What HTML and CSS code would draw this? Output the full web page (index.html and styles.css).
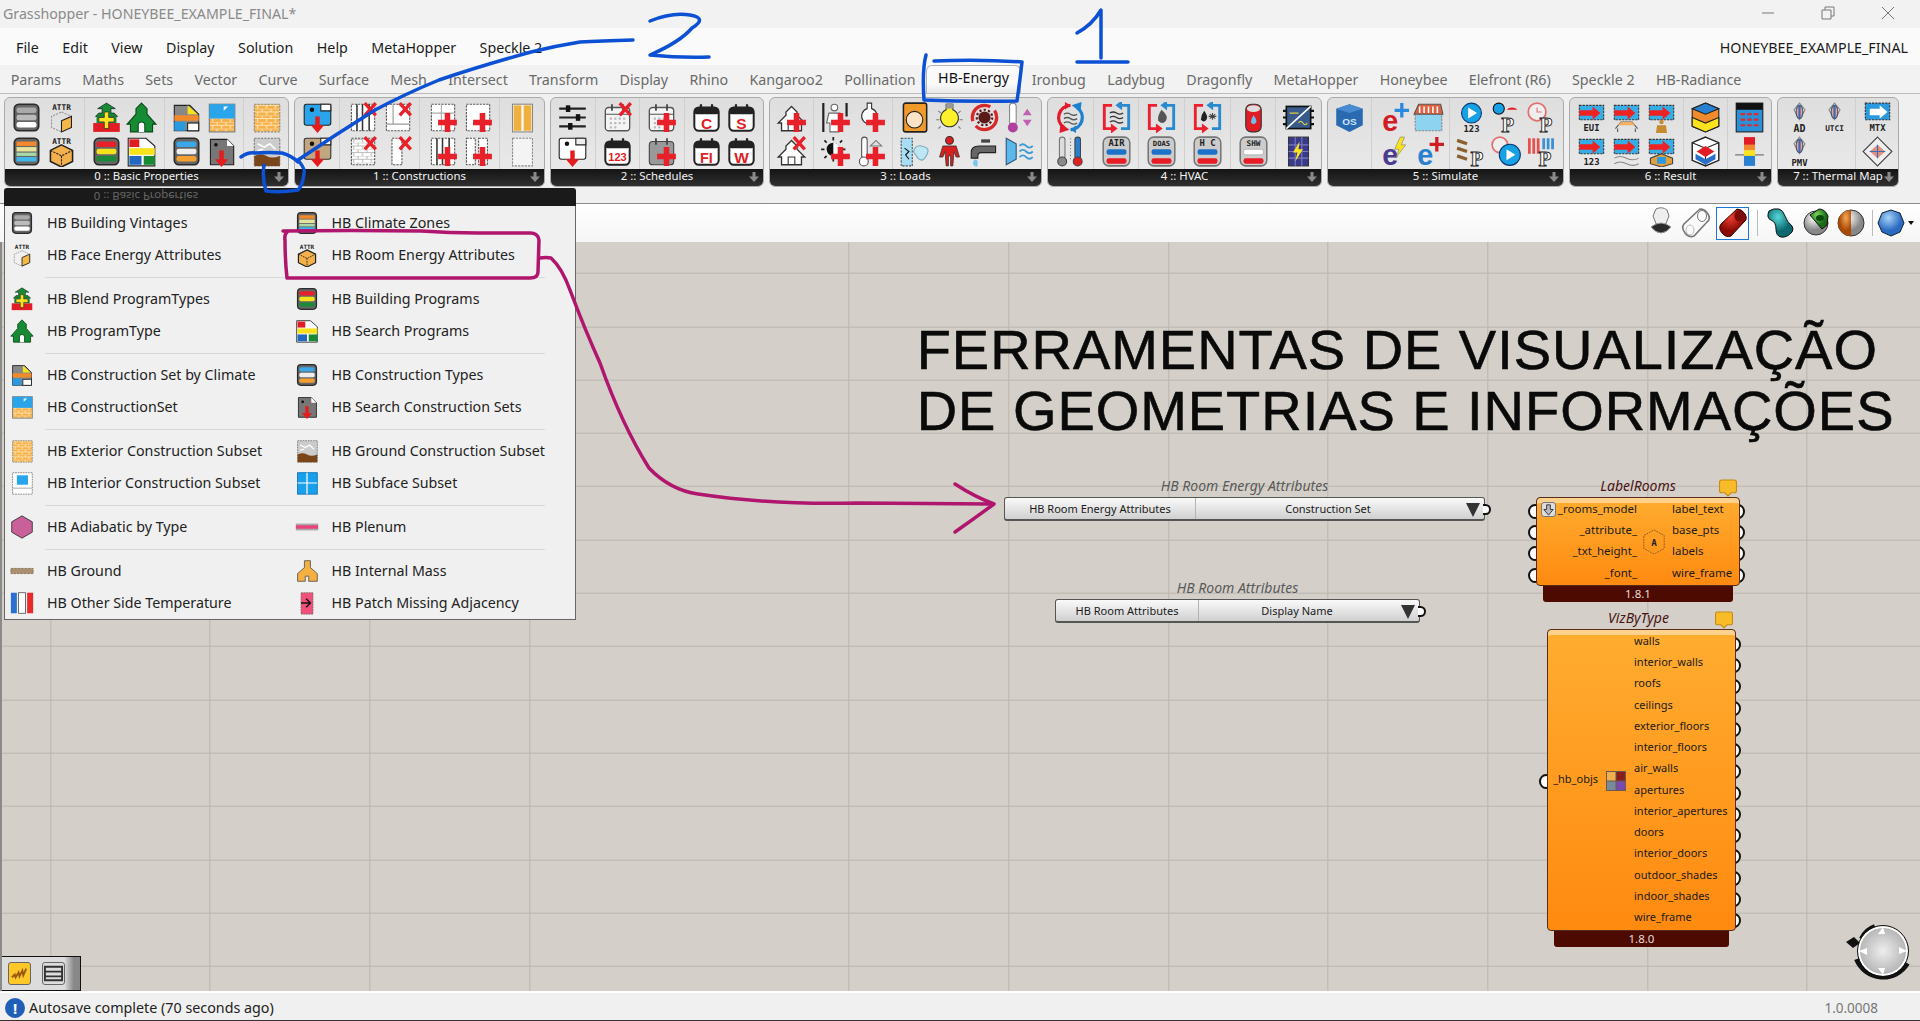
FILE: index.html
```html
<!DOCTYPE html>
<html lang="en">
<head>
<meta charset="utf-8">
<title>Grasshopper - HONEYBEE_EXAMPLE_FINAL*</title>
<link rel="stylesheet" href="styles.css">
</head>
<body>
<svg class="defs" xmlns="http://www.w3.org/2000/svg">
<defs>
<pattern id="brk" width="8" height="6" patternUnits="userSpaceOnUse"><rect width="8" height="6" fill="#f5b04a"/><path d="M0 0h8M0 3h8M2 0v3M6 3v3" stroke="#ffe6b8" stroke-width="1"/></pattern>
<pattern id="wbr" width="8" height="6" patternUnits="userSpaceOnUse"><rect width="8" height="6" fill="#fff"/><path d="M0 0h8M0 3h8M2 0v3M6 3v3" stroke="#bbb" stroke-width="1"/></pattern>
<radialGradient id="gTeal" cx=".4" cy=".3"><stop offset="0" stop-color="#58d8d8"/><stop offset="1" stop-color="#0a6a70"/></radialGradient>
<radialGradient id="gRed" cx=".4" cy=".3"><stop offset="0" stop-color="#f04030"/><stop offset="1" stop-color="#8a0a06"/></radialGradient>
<radialGradient id="gGreen" cx=".4" cy=".3"><stop offset="0" stop-color="#7ad858"/><stop offset="1" stop-color="#1a6a1a"/></radialGradient>
<radialGradient id="gWhite" cx=".4" cy=".3"><stop offset="0" stop-color="#fff"/><stop offset="1" stop-color="#888"/></radialGradient>
<radialGradient id="gOrange" cx=".6" cy=".3"><stop offset="0" stop-color="#f8a850"/><stop offset="1" stop-color="#a84a08"/></radialGradient>
<radialGradient id="gBlue" cx=".4" cy=".3"><stop offset="0" stop-color="#a8d4fa"/><stop offset="1" stop-color="#2a6ac0"/></radialGradient>
<rect id="fr" x="3" y="2" width="22" height="24" rx="4" fill="#666" stroke="#2a2a2a" stroke-width="1.5"/>
<path id="plus" fill="#e8202a" d="M16 10h5v6h6v5h-6v6h-5v-6h-6v-5h6z"/>
<path id="ex" fill="none" stroke="#e8202a" stroke-width="3" d="M16 1l10 11M26 1L16 12"/>
<path id="down" fill="#e41c1c" d="M12 13h4v8h4l-6 7-6-7h4z"/>
<rect id="dash" x="4" y="2" width="21" height="24" fill="#fff" stroke="#555" stroke-dasharray="2 1"/>
<g id="fold"><path d="M4 3h15l6 6v17H4z" fill="#777" stroke="#222"/><path d="M19 3l6 6h-6z" fill="#fff"/><circle cx="9" cy="8" r="1.6" fill="#111"/></g>
<g id="calb"><rect x="3" y="5" width="22" height="21" rx="4" fill="#fff" stroke="#222" stroke-width="1.8"/><rect x="3" y="5" width="22" height="6" rx="2" fill="#222"/><path d="M9 2v6M19 2v6" stroke="#222" stroke-width="2"/></g>
<g id="calw"><rect x="3" y="5" width="22" height="21" rx="3" fill="#f4f4f4" stroke="#555" stroke-width="1.2"/><path d="M3 11h22" stroke="#555"/><path d="M9 2v6M19 2v6" stroke="#444" stroke-width="1.6"/><path d="M7 15h14M7 19h14M7 23h8" stroke="#bbb" stroke-width="2" stroke-dasharray="2 2"/></g>
<g id="hs"><path d="M14 4l5 5v3l7 7h-3v7H5v-7H2l7-7V9z" fill="#fff" stroke="#333" stroke-width="1.2"/><path d="M11 26v-7h6v7" fill="none" stroke="#333"/></g>
<g id="mini"><rect x="3" y="3" width="22" height="13" fill="#35aee8" stroke="#333" stroke-dasharray="2 1"/><path d="M3 10h14" stroke="#ee2222" stroke-width="5"/><path d="M15 4l7 6-7 6z" fill="#ee2222"/></g>

<symbol id="vint" viewBox="0 0 28 28"><use href="#fr"/><rect x="5" y="5" width="18" height="5" rx="2" fill="#aaa"/><rect x="5" y="11.5" width="18" height="5" rx="2" fill="#bbb"/><rect x="5" y="18" width="18" height="5" rx="2" fill="#fff"/></symbol>
<symbol id="zones" viewBox="0 0 28 28"><use href="#fr"/><rect x="5" y="5" width="18" height="4" fill="#f08a2c"/><rect x="5" y="10" width="18" height="4" fill="#e6e49a"/><rect x="5" y="15" width="18" height="3" fill="#a6d8a8"/><rect x="5" y="19" width="18" height="4" fill="#42b6e8"/></symbol>
<symbol id="prog" viewBox="0 0 28 28"><use href="#fr"/><rect x="5" y="5" width="18" height="5" rx="2" fill="#e8202a"/><rect x="5" y="11.5" width="18" height="5" rx="2" fill="#f4e21c"/><rect x="5" y="18" width="18" height="5" rx="2" fill="#1a8a38"/></symbol>
<symbol id="types" viewBox="0 0 28 28"><use href="#fr"/><rect x="5" y="5" width="18" height="5" rx="2" fill="#3aa8e8"/><rect x="5" y="11.5" width="18" height="5" rx="2" fill="#eee"/><rect x="5" y="18" width="18" height="5" rx="2" fill="#f4a030"/></symbol>
<symbol id="afc" viewBox="0 0 28 28"><text class="tm" x="14" y="7" font-size="7">ATTR</text><path d="M14 9l9 4v10l-9 4-9-4V13z" fill="none" stroke="#999" stroke-dasharray="2 1"/><path d="M14 17l9-4v10l-9 4z" fill="#f4b84a" stroke="#222"/></symbol>
<symbol id="arm" viewBox="0 0 28 28"><text class="tm" x="14" y="7" font-size="7">ATTR</text><path d="M14 8l10 5v10l-10 5-10-5V13z" fill="#f4b04a" stroke="#222" stroke-width="1.4"/><path d="M4 13l10 5 10-5M14 18v10" fill="none" stroke="#222" stroke-dasharray="2 1"/></symbol>
<symbol id="blend" viewBox="0 0 28 28"><path d="M14 1l8 5h-4v4h3l3 3H4l3-3h3V6H6z" fill="#178a34" stroke="#111" stroke-width=".6"/><rect x="2" y="19" width="24" height="8" fill="#e21c24"/><rect x="5" y="13" width="18" height="6" fill="#178a34"/><path d="M12 9h4v5h5v4h-5v6h-4v-6H7v-4h5z" fill="#f8e21c" stroke="#333" stroke-width=".7"/></symbol>
<symbol id="house" viewBox="0 0 28 28"><path d="M14 1l5 5v5l8 9h-3v7H4v-7H1l8-9V6z" fill="#178a34" stroke="#0b4a1a"/><path d="M11 27v-6a3 3 0 016 0v6" fill="#fff" stroke="#0b4a1a"/></symbol>
<symbol id="sprog" viewBox="0 0 28 28"><path d="M2 2h16l8 7v18H2z" fill="#fff" stroke="#222"/><rect x="3" y="3" width="9" height="7" fill="#e21c24"/><rect x="3" y="11" width="23" height="6" fill="#f8e21c"/><rect x="3" y="18" width="11" height="8" fill="#2068c0"/><rect x="16" y="18" width="10" height="8" fill="#178a34"/></symbol>
<symbol id="clim" viewBox="0 0 28 28"><path d="M3 3h14l8 8v15H3z" fill="#888" stroke="#222"/><path d="M15 3l9 8h-9z" fill="#f8e21c"/><rect x="3" y="12" width="22" height="5" fill="#f08a2c"/><rect x="3" y="18" width="10" height="8" fill="#2a9ae0"/><rect x="15" y="19" width="10" height="7" fill="#fff" stroke="#222"/></symbol>
<symbol id="cset" viewBox="0 0 28 28"><rect x="3" y="2" width="23" height="25" fill="url(#brk)" stroke="#777"/><rect x="3" y="2" width="23" height="13" fill="#2aa4ea"/><path d="M16 4l4 0-4 4z" fill="#fff"/></symbol>
<symbol id="scon" viewBox="0 0 28 28"><use href="#fold"/><use href="#down"/></symbol>
<symbol id="brick" viewBox="0 0 28 28"><rect x="3" y="2" width="23" height="25" fill="url(#brk)" stroke="#888" stroke-dasharray="2 1"/></symbol>
<symbol id="grnd" viewBox="0 0 28 28"><rect x="3" y="2" width="23" height="25" fill="#ccc" stroke="#777" stroke-dasharray="2 1"/><path d="M6 7l6 3 5-3 5 5M6 13l5-1" stroke="#fff" stroke-width="1.4" fill="none"/><path d="M3 18q6-3 11 0t12 0v9H3z" fill="#7a4518"/></symbol>
<symbol id="inter" viewBox="0 0 28 28"><rect x="3" y="2" width="23" height="25" fill="#fff" stroke="#777" stroke-dasharray="2 1"/><rect x="8" y="5" width="13" height="11" fill="#2aa4ea"/><path d="M3 20h23" stroke="#999"/></symbol>
<symbol id="subf" viewBox="0 0 28 28"><rect x="3" y="2" width="23" height="25" fill="#18a0ec" stroke="#0a70b0"/><path d="M3 14h23M14 2v25" stroke="#fff" stroke-width="1.4"/></symbol>
<symbol id="hexa" viewBox="0 0 28 28"><path d="M14 1l12 7v12l-12 7-12-7V8z" fill="#c9609a" stroke="#333"/></symbol>
<symbol id="plen" viewBox="0 0 28 28"><rect x="1" y="10" width="26" height="8" fill="#aaa"/><rect x="1" y="12" width="26" height="4" fill="#e8447a"/></symbol>
<symbol id="gbar" viewBox="0 0 28 28"><rect x="1" y="11" width="26" height="6" fill="#aa8f70" stroke="#8a7050" stroke-dasharray="3 1"/></symbol>
<symbol id="mass" viewBox="0 0 28 28"><path d="M11 2h7v8l8 7v9H16v-6h-4v6H3v-9l8-7z" fill="#f4b040" stroke="#555"/></symbol>
<symbol id="osid" viewBox="0 0 28 28"><rect x="1" y="2" width="7" height="24" fill="#2a70d0"/><rect x="10" y="2" width="8" height="24" fill="#fff" stroke="#555"/><rect x="20" y="2" width="7" height="24" fill="#e82a2a"/></symbol>
<symbol id="patch" viewBox="0 0 28 28"><rect x="7" y="2" width="14" height="25" fill="#f0507a" stroke="#777" stroke-dasharray="2 1"/><path d="M7 14h11M13 9l5 5-5 5" fill="none" stroke="#111" stroke-width="1.6"/></symbol>

<symbol id="bd" viewBox="0 0 28 28"><rect x="2" y="2" width="24" height="19" rx="2" fill="#2aa4ea" stroke="#222"/><path d="M17 2h9v6h-9z" fill="#fff" stroke="#222"/><circle cx="9" cy="7" r="2" fill="#111"/><use href="#down"/></symbol>
<symbol id="td" viewBox="0 0 28 28"><rect x="2" y="2" width="24" height="19" rx="2" fill="#c2a680" stroke="#333"/><path d="M17 2h9v6h-9z" fill="#fff" stroke="#222"/><circle cx="9" cy="7" r="2" fill="#111"/><use href="#down"/></symbol>
<symbol id="wd" viewBox="0 0 28 28"><rect x="2" y="2" width="24" height="19" rx="2" fill="#fff" stroke="#222"/><circle cx="9" cy="7" r="2" fill="#111"/><path d="M17 2h9v6h-9z" fill="#eee" stroke="#222"/><use href="#down"/></symbol>
<symbol id="wx1" viewBox="0 0 28 28"><use href="#dash"/><path d="M9 2v24M14 2v24M20 2v24" stroke="#333" stroke-width="1.4"/><use href="#ex"/></symbol>
<symbol id="wx2" viewBox="0 0 28 28"><use href="#dash"/><path d="M4 20h21M10 2v18" stroke="#999"/><use href="#ex"/></symbol>
<symbol id="wx3" viewBox="0 0 28 28"><rect x="4" y="2" width="21" height="24" fill="url(#wbr)" stroke="#555" stroke-dasharray="2 1"/><use href="#ex"/></symbol>
<symbol id="wx4" viewBox="0 0 28 28"><rect x="9" y="2" width="9" height="24" fill="#fff" stroke="#555" stroke-dasharray="2 1"/><use href="#ex"/></symbol>
<symbol id="wp1" viewBox="0 0 28 28"><use href="#dash"/><path d="M4 10h21M13 2v24" stroke="#aaa"/><use href="#plus"/></symbol>
<symbol id="wp2" viewBox="0 0 28 28"><use href="#dash"/><use href="#plus"/></symbol>
<symbol id="wp3" viewBox="0 0 28 28"><use href="#dash"/><path d="M9 2v24M14 2v24M20 2v24" stroke="#333" stroke-width="1.4"/><use href="#plus"/></symbol>
<symbol id="wp4" viewBox="0 0 28 28"><rect x="4" y="2" width="8" height="24" fill="#fff" stroke="#555" stroke-dasharray="2 1"/><rect x="15" y="2" width="8" height="24" fill="#fff" stroke="#555" stroke-dasharray="2 1"/><use href="#plus"/></symbol>
<symbol id="orb" viewBox="0 0 28 28"><rect x="5" y="2" width="18" height="25" fill="#fff" stroke="#888"/><rect x="6" y="3" width="7" height="23" fill="#f0b040"/><rect x="15" y="3" width="7" height="23" fill="#f0b040"/></symbol>
<symbol id="blk" viewBox="0 0 28 28"><rect x="5" y="2" width="18" height="25" fill="#f4f4f4" stroke="#888" stroke-dasharray="2 1"/></symbol>

<symbol id="sli" viewBox="0 0 28 28"><path d="M2 6h24M2 14h24M2 22h24" stroke="#222" stroke-width="2"/><rect x="8" y="3" width="4" height="6" fill="#111"/><rect x="17" y="11" width="4" height="6" fill="#111"/><rect x="10" y="19" width="4" height="6" fill="#111"/></symbol>
<symbol id="cx" viewBox="0 0 28 28"><use href="#calw"/><use href="#ex"/></symbol>
<symbol id="cp" viewBox="0 0 28 28"><use href="#calw"/><use href="#plus"/></symbol>
<symbol id="cg" viewBox="0 0 28 28"><rect x="3" y="5" width="22" height="21" rx="3" fill="#999" stroke="#444"/><path d="M9 2v6M19 2v6" stroke="#444" stroke-width="1.6"/><use href="#plus"/></symbol>
<symbol id="c123" viewBox="0 0 28 28"><use href="#calb"/><text class="tl" x="14" y="23" font-size="10">123</text></symbol>
<symbol id="cC" viewBox="0 0 28 28"><use href="#calb"/><text class="tl" x="14" y="24" font-size="14">C</text></symbol>
<symbol id="cS" viewBox="0 0 28 28"><use href="#calb"/><text class="tl" x="14" y="24" font-size="14">S</text></symbol>
<symbol id="cF" viewBox="0 0 28 28"><use href="#calb"/><text class="tl" x="14" y="24" font-size="13">FI</text></symbol>
<symbol id="cW" viewBox="0 0 28 28"><use href="#calb"/><text class="tl" x="14" y="24" font-size="14">W</text></symbol>

<symbol id="hp" viewBox="0 0 28 28"><use href="#hs"/><use href="#plus"/></symbol>
<symbol id="hx" viewBox="0 0 28 28"><use href="#hs"/><use href="#ex"/></symbol>
<symbol id="perp" viewBox="0 0 28 28"><path d="M3 1v26M24 1v12" stroke="#222" stroke-width="2"/><circle cx="13" cy="5" r="3" fill="#fff" stroke="#666"/><path d="M8 10h10l2 9h-3v8H9v-8H6z" fill="#fff" stroke="#666"/><use href="#plus"/></symbol>
<symbol id="bulbp" viewBox="0 0 28 28"><path d="M11 1h4v5a7 7 0 11-4 0z" fill="#fff" stroke="#333"/><use href="#plus"/></symbol>
<symbol id="sunp" viewBox="0 0 28 28"><circle cx="12" cy="12" r="6" fill="#111"/><path d="M12 6a6 6 0 010 12z" fill="#fff"/><path d="M12 1v3M12 20v3M1 12h3M20 12h3M4 4l2 2M4 20l2-2M20 4l-2 2" stroke="#222" stroke-width="1.6"/><use href="#plus"/></symbol>
<symbol id="thp" viewBox="0 0 28 28"><rect x="6" y="1" width="5" height="19" rx="2.5" fill="#fff" stroke="#555"/><circle cx="8" cy="23" r="4" fill="#fff" stroke="#555"/><path d="M14 9l5-5 5 5z" fill="#ddd" stroke="#777"/><use href="#plus"/></symbol>
<symbol id="wash" viewBox="0 0 28 28"><rect x="4" y="1" width="21" height="26" rx="2" fill="#f09a2c" stroke="#222" stroke-width="1.4"/><circle cx="14" cy="16" r="7.5" fill="#fbe2c4" stroke="#222"/></symbol>
<symbol id="wair" viewBox="0 0 28 28"><rect x="2" y="2" width="10" height="25" fill="#a8def5" stroke="#555" stroke-dasharray="2 1"/><path d="M5 11l4 3-3 3 3 4" stroke="#111" fill="none"/><path d="M13 14q2-6 7-5t6 3-2 7-7 1z" fill="#bfe6f5" stroke="#7ab"/></symbol>
<symbol id="bulb" viewBox="0 0 28 28"><path d="M11 2h6v5a8 8 0 11-6 0z" fill="#fbf02a" stroke="#333"/><rect x="11" y="1" width="6" height="5" fill="#999"/><path d="M2 16h3M23 16h3M4 8l2 2M24 8l-2 2M4 24l2-2M24 24l-2-2" stroke="#777"/></symbol>
<symbol id="pred" viewBox="0 0 28 28"><circle cx="14" cy="4" r="3.5" fill="#d92020" stroke="#333"/><path d="M8 9h12l3 10h-3l-2-5-1 13h-2v-9h-2v9h-2l-1-13-2 5H5z" fill="#d92020" stroke="#333" stroke-width=".7"/></symbol>
<symbol id="gear" viewBox="0 0 28 28"><circle cx="14" cy="14" r="11" fill="none" stroke="#d62a2a" stroke-width="3" stroke-dasharray="26 5"/><circle cx="14" cy="14" r="5.5" fill="#5a1a1a"/><circle cx="14" cy="14" r="7" fill="none" stroke="#5a1a1a" stroke-width="2" stroke-dasharray="2 2"/></symbol>
<symbol id="fauc" viewBox="0 0 28 28"><path d="M2 15q0-6 7-6h15v6H11q-3 0-3 3v2H2z" fill="#666" stroke="#222"/><rect x="11" y="3" width="8" height="3" fill="#444"/><path d="M5 21q-3 4 0 6t3-2-3-4z" fill="#7cc6ee"/></symbol>
<symbol id="tharr" viewBox="0 0 28 28"><rect x="5" y="1" width="6" height="20" rx="3" fill="#fff" stroke="#888"/><circle cx="8" cy="23" r="4.5" fill="#b040a0"/><path d="M17 12l4-6 4 6zM17 16l4 6 4-6z" fill="#c060b0"/></symbol>
<symbol id="vent" viewBox="0 0 28 28"><path d="M2 2l9 5v14l-9 5z" fill="#5ab8ea" stroke="#357"/><path d="M14 9q3-3 6 0t6 0M14 14q3-3 6 0t6 0M14 19q3-3 6 0t6 0" stroke="#3a9ad8" stroke-width="1.6" fill="none"/></symbol>

<symbol id="cyc" viewBox="0 0 28 28"><path d="M14 3a11 11 0 00-6 20" fill="none" stroke="#e01c2c" stroke-width="3"/><path d="M5 19l8 6-9 3zM14 3l-5-3 0 7z" fill="#e01c2c"/><path d="M14 25a11 11 0 006-20" fill="none" stroke="#1c82d0" stroke-width="3"/><path d="M23 9l-8-6 9-3zM14 25l5 3 0-7z" fill="#1c82d0"/><path d="M8 11q3-2 6 0t6 0M8 15q3-2 6 0t6 0M8 19q3-2 6 0t6 0" stroke="#555" stroke-width="1.2" fill="none"/></symbol>
<symbol id="th2" viewBox="0 0 28 28"><rect x="4" y="1" width="5" height="20" rx="2.5" fill="#ddd" stroke="#777"/><circle cx="6.5" cy="23" r="4" fill="#888" stroke="#444"/><path d="M14 2v20" stroke="#777" stroke-dasharray="1 2"/><rect x="18" y="1" width="5" height="20" rx="2.5" fill="#2a80d0" stroke="#444"/><circle cx="20.500" cy="23" r="4" fill="#e02020" stroke="#444"/></symbol>
<g id="lp"><path d="M10 3H3v21h7" fill="none" stroke="#ee2030" stroke-width="2.6"/><path d="M9 19.500l6 4.500-6 4.500z" fill="#ee2030"/><path d="M18 24h7V3h-7" fill="none" stroke="#2a8ad0" stroke-width="2.6"/><path d="M19 -1.500L13 3l6 4.500z" fill="#2a8ad0"/></g>
<symbol id="l1" viewBox="0 0 28 28"><use href="#lp"/><path d="M8 10q3-2 6 0t6 0M8 14q3-2 6 0t6 0M8 18q3-2 6 0t6 0" stroke="#333" stroke-width="1.2" fill="none"/></symbol>
<symbol id="l2" viewBox="0 0 28 28"><use href="#lp"/><path d="M14 7q7 6 4 10t-7 0q-1-4 3-10z" fill="#555"/></symbol>
<symbol id="l3" viewBox="0 0 28 28"><use href="#lp"/><path d="M11 8q4 5 2 8t-5 0q0-4 3-8z" fill="#222"/><path d="M15 13h7M18.500 10v6M16 11l5 4M21 11l-5 4" stroke="#444"/></symbol>
<g id="hv"><rect x="2" y="1" width="24" height="26" rx="5" fill="#ccc" stroke="#777" stroke-width="1.4"/><rect x="5" y="12" width="18" height="5" rx="2" fill="#1c72c8"/><rect x="5" y="20" width="18" height="5" rx="2" fill="#e81c24"/></g>
<symbol id="AIR" viewBox="0 0 28 28"><use href="#hv"/><text class="tm" x="14" y="9" font-size="8">AIR</text></symbol>
<symbol id="DOAS" viewBox="0 0 28 28"><use href="#hv"/><text class="tm" x="14" y="9" font-size="6.500">DOAS</text></symbol>
<symbol id="HC" viewBox="0 0 28 28"><use href="#hv"/><text class="tm" x="14" y="9" font-size="8">H C</text></symbol>
<symbol id="SHW" viewBox="0 0 28 28"><rect x="2" y="1" width="24" height="26" rx="5" fill="#ccc" stroke="#777" stroke-width="1.4"/><rect x="5" y="12" width="18" height="5" rx="2" fill="#fff" stroke="#999" stroke-width=".5"/><rect x="5" y="20" width="18" height="5" rx="2" fill="#e81c24"/><text class="tm" x="14" y="9" font-size="7">SHW</text></symbol>
<symbol id="cyl" viewBox="0 0 28 28"><rect x="7" y="2" width="14" height="25" rx="5" fill="#e21c24" stroke="#333"/><ellipse cx="14" cy="6" rx="6" ry="3" fill="#ddd"/><path d="M14 12q4 5 2 7t-4 0q-1-2 2-7z" fill="#6ac0ee"/></symbol>
<symbol id="inv" viewBox="0 0 28 28"><rect x="3" y="4" width="22" height="20" fill="#3a5a8c" stroke="#111" stroke-width="1.5"/><path d="M0 8h3M0 14h3M0 20h3M25 8h3M25 14h3M25 20h3" stroke="#111" stroke-width="2"/><path d="M3 24L25 4" stroke="#fff" stroke-width="1.4"/><path d="M6 10h8" stroke="#e0d040"/><path d="M14 19q2-3 4 0t4 0" stroke="#e0d040" fill="none"/></symbol>
<symbol id="pv" viewBox="0 0 28 28"><rect x="5" y="1" width="18" height="26" fill="#3a3a8c" stroke="#333"/><path d="M5 8h18M5 14h18M5 20h18M11 1v26M17 1v26" stroke="#7a7ac0"/><path d="M15 5l-6 10h4l-2 8 7-11h-4z" fill="#fbe21c"/></symbol>

<symbol id="os" viewBox="0 0 28 28"><path d="M14 2l12 4v15l-12 6-12-6V6z" fill="#2a6ab0"/><path d="M14 2l12 4-12 4L2 6z" fill="#4a8ad0"/><text class="tl wh" x="14" y="21" font-size="9">OS</text></symbol>
<symbol id="ep" viewBox="0 0 28 28"><text class="te" x="11" y="26" fill="#d01c24" font-size="26">e</text><path d="M20 1h3v5h5v3h-5v5h-3V9h-5V6h5z" fill="#2a8ae0"/></symbol>
<symbol id="eb" viewBox="0 0 28 28"><text class="te" x="11" y="26" fill="#4a3a90" font-size="26">e</text><path d="M20 1l-5 11h4l-3 8 9-12h-4l3-7z" fill="#fbe21c" stroke="#777" stroke-width=".5"/></symbol>
<symbol id="ep2" viewBox="0 0 28 28"><text class="te" x="11" y="26" fill="#2a80d0" font-size="26">e</text><path d="M20 1h3v5h5v3h-5v5h-3V9h-5V6h5z" fill="#d01c24"/></symbol>
<symbol id="awn" viewBox="0 0 28 28"><rect x="2" y="9" width="24" height="17" fill="#8ed4f0" stroke="#888" stroke-dasharray="2 1"/><path d="M5 2h20l2 9H1z" fill="#e06040" stroke="#555"/><path d="M6 4v6M10 4v6M14 4v6M18 4v6M22 4v6" stroke="#fff" stroke-width="1.4"/></symbol>
<symbol id="pl" viewBox="0 0 28 28"><circle cx="14" cy="10" r="9" fill="#18a0e4" stroke="#0a3a70"/><path d="M11 5l8 5-8 5z" fill="#fff"/><text class="tm" x="14" y="27" font-size="8">123</text></symbol>
<symbol id="pin" viewBox="0 0 28 28"><circle cx="7" cy="6" r="5" fill="#18a0e4" stroke="#111"/><path d="M14 7a7 7 0 0110 0z" fill="#e21c24"/><text class="tp" x="15" y="27">P</text></symbol>
<symbol id="cl" viewBox="0 0 28 28"><circle cx="10" cy="9" r="8" fill="#eee" stroke="#e07070" stroke-width="1.6"/><path d="M10 5v4h4" stroke="#e07070" fill="none"/><text class="tp" x="18" y="27">P</text></symbol>
<symbol id="stp" viewBox="0 0 28 28"><path d="M1 4l9 3M1 11l9 3M1 18l9 3" stroke="#8a6030" stroke-width="3"/><text class="tp" x="19" y="27">P</text></symbol>
<symbol id="clp" viewBox="0 0 28 28"><circle cx="8" cy="8" r="7" fill="#eee" stroke="#e07070" stroke-width="1.500"/><circle cx="17" cy="17" r="9.500" fill="#18a0e4" stroke="#0a3a70"/><path d="M14 12l8 5-8 5z" fill="#fff"/></symbol>
<symbol id="htp" viewBox="0 0 28 28"><path d="M3 2v14M7 2v14M11 2v14" stroke="#e85050" stroke-width="2.5"/><path d="M16 2v10M20 2v10M24 2v10" stroke="#3a90d8" stroke-width="2.5"/><text class="tp" x="17" y="27">P</text></symbol>

<symbol id="rE" viewBox="0 0 28 28"><use href="#mini"/><text class="tm" x="14" y="26" font-size="8">EUI</text></symbol>
<symbol id="r1" viewBox="0 0 28 28"><use href="#mini"/><text class="tm" x="14" y="26" font-size="8">123</text></symbol>
<symbol id="rC" viewBox="0 0 28 28"><use href="#mini"/><path d="M4 24l5-6h10l5 6M6 24v3M22 24v3" fill="none" stroke="#555"/><path d="M9 18h10l3 3H6z" fill="#f0b060"/></symbol>
<symbol id="rW" viewBox="0 0 28 28"><use href="#mini"/><path d="M3 20q5-3 11 0t11 0M3 25q5-3 11 0t11 0" fill="none" stroke="#888"/></symbol>
<symbol id="rP" viewBox="0 0 28 28"><use href="#mini"/><circle cx="14" cy="18" r="2" fill="#c68a30"/><path d="M10 21h8l1 7h-10z" fill="#c68a30"/></symbol>
<symbol id="rB" viewBox="0 0 28 28"><use href="#mini"/><path d="M14 16l10 4v5l-10 3-10-3v-5z" fill="#e0a040" stroke="#444"/><rect x="10" y="19" width="8" height="6" fill="#2a9ae0"/></symbol>
<symbol id="cube1" viewBox="0 0 28 28"><path d="M14 1l12 5v16l-12 5-12-5V6z" fill="#f08a2c" stroke="#222"/><path d="M2 6l12 5 12-5-12-5z" fill="#2a80d0" stroke="#222"/><path d="M2 14l12 5 12-5v8l-12 5-12-5z" fill="#fbe21c" stroke="#222"/></symbol>
<symbol id="cube2" viewBox="0 0 28 28"><path d="M14 1l12 5v16l-12 5-12-5V6z" fill="#fff" stroke="#222" stroke-width="1.300"/><path d="M2 6l12 5 12-5M14 11v16" stroke="#222" fill="none"/><path d="M14 9l8 5-8 5-8-5z" fill="#e21c24"/><path d="M5 16l9 5 9-5v5l-9 5-9-5z" fill="#2a70c8"/></symbol>
<symbol id="tab" viewBox="0 0 28 28"><rect x="2" y="1" width="24" height="26" fill="#2a90d8" stroke="#222"/><rect x="2" y="1" width="24" height="6" fill="#111"/><path d="M6 11h4M12 11h4M18 11h4M6 16h4M12 16h4M18 16h4M6 21h4M12 21h4M18 21h4" stroke="#e02a2a" stroke-width="2"/></symbol>
<symbol id="bar" viewBox="0 0 28 28"><path d="M1 17h26" stroke="#777"/><rect x="9" y="1" width="10" height="7" fill="#e21c24"/><rect x="9" y="8" width="10" height="5" fill="#f08a2c"/><rect x="9" y="13" width="10" height="5" fill="#fbe21c"/><rect x="9" y="18" width="10" height="9" fill="#2a80d0"/></symbol>
<g id="tm"><path d="M14 1l5 6-5 9-5-9z" fill="#ddd" stroke="#888"/><ellipse cx="14" cy="9" rx="3" ry="6" fill="#e8a0a0" stroke="#456"/><path d="M14 3v12" stroke="#3a6ab0" stroke-width="2"/></g>
<symbol id="tAD" viewBox="0 0 28 28"><use href="#tm"/><text class="tm" x="14" y="27" font-size="9">AD</text></symbol>
<symbol id="tUT" viewBox="0 0 28 28"><use href="#tm"/><text class="tm" x="14" y="26" font-size="7">UTCI</text></symbol>
<symbol id="tPM" viewBox="0 0 28 28"><use href="#tm"/><text class="tm" x="14" y="27" font-size="8">PMV</text></symbol>
<symbol id="mtx" viewBox="0 0 28 28"><rect x="3" y="1" width="22" height="15" fill="#2a9ae0" stroke="#333" stroke-dasharray="2 1"/><path d="M7 6h9V3l7 6-7 6v-3H7z" fill="#fff"/><text class="tm" x="14" y="26" font-size="8">MTX</text></symbol>
<symbol id="tcube" viewBox="0 0 28 28"><path d="M14 1l13 13-13 13L1 14z" fill="#f0eeee" stroke="#444"/><path d="M14 8l7 6-7 6-7-6z" fill="#e09080"/><path d="M14 8v12M7 14h14" stroke="#3a70b0"/></symbol>
</defs>
</svg>

<div class="page">
  <header class="titlebar">
    <span class="wintitle">Grasshopper - HONEYBEE_EXAMPLE_FINAL*</span>
    <div class="winctl">
      <svg viewBox="0 0 14 14"><path d="M1 7h12" stroke="#777"/></svg>
      <svg viewBox="0 0 14 14"><path d="M1 4h9v9H1zM4 4V1h9v9h-3" fill="none" stroke="#777"/></svg>
      <svg viewBox="0 0 14 14"><path d="M1 1l12 12M13 1L1 13" stroke="#777"/></svg>
    </div>
  </header>
  <nav class="menubar">
    <span>File</span><span>Edit</span><span>View</span><span>Display</span><span>Solution</span><span>Help</span><span>MetaHopper</span><span>Speckle 2</span>
    <b class="docname">HONEYBEE_EXAMPLE_FINAL</b>
  </nav>
  <nav class="tabs">
    <span>Params</span><span>Maths</span><span>Sets</span><span>Vector</span><span>Curve</span><span>Surface</span><span>Mesh</span><span>Intersect</span><span>Transform</span><span>Display</span><span>Rhino</span><span>Kangaroo2</span><span>Pollination</span><span class="active">HB-Energy</span><span>Ironbug</span><span>Ladybug</span><span>Dragonfly</span><span>MetaHopper</span><span>Honeybee</span><span>Elefront (R6)</span><span>Speckle 2</span><span>HB-Radiance</span>
  </nav>
  <section class="ribbon">
    <div class="panel p0">
      <div class="pbody">
        <div class="grp"><svg class="ic"><use href="#vint"/></svg><svg class="ic"><use href="#zones"/></svg><svg class="ic"><use href="#afc"/></svg><svg class="ic"><use href="#arm"/></svg></div>
        <div class="grp"><svg class="ic"><use href="#blend"/></svg><svg class="ic"><use href="#prog"/></svg><svg class="ic"><use href="#house"/></svg><svg class="ic"><use href="#sprog"/></svg></div>
        <div class="grp"><svg class="ic"><use href="#clim"/></svg><svg class="ic"><use href="#types"/></svg><svg class="ic"><use href="#cset"/></svg><svg class="ic"><use href="#scon"/></svg></div>
        <div class="grp"><svg class="ic"><use href="#brick"/></svg><svg class="ic"><use href="#grnd"/></svg></div>
      </div>
      <div class="pfoot">0 :: Basic Properties</div>
    </div>
    <div class="panel p1">
      <div class="pbody">
        <div class="grp"><svg class="ic"><use href="#bd"/></svg><svg class="ic"><use href="#td"/></svg></div>
        <div class="grp"><svg class="ic"><use href="#wx1"/></svg><svg class="ic"><use href="#wx3"/></svg><svg class="ic"><use href="#wx2"/></svg><svg class="ic"><use href="#wx4"/></svg></div>
        <div class="grp"><svg class="ic"><use href="#wp1"/></svg><svg class="ic"><use href="#wp3"/></svg><svg class="ic"><use href="#wp2"/></svg><svg class="ic"><use href="#wp4"/></svg></div>
        <div class="grp"><svg class="ic"><use href="#orb"/></svg><svg class="ic"><use href="#blk"/></svg></div>
      </div>
      <div class="pfoot">1 :: Constructions</div>
    </div>
    <div class="panel p2">
      <div class="pbody">
        <div class="grp"><svg class="ic"><use href="#sli"/></svg><svg class="ic"><use href="#wd"/></svg></div>
        <div class="grp"><svg class="ic"><use href="#cx"/></svg><svg class="ic"><use href="#c123"/></svg></div>
        <div class="grp"><svg class="ic"><use href="#cp"/></svg><svg class="ic"><use href="#cg"/></svg></div>
        <div class="grp"><svg class="ic"><use href="#cC"/></svg><svg class="ic"><use href="#cF"/></svg><svg class="ic"><use href="#cS"/></svg><svg class="ic"><use href="#cW"/></svg></div>
      </div>
      <div class="pfoot">2 :: Schedules</div>
    </div>
    <div class="panel p3">
      <div class="pbody">
        <div class="grp"><svg class="ic"><use href="#hp"/></svg><svg class="ic"><use href="#hx"/></svg></div>
        <div class="grp"><svg class="ic"><use href="#perp"/></svg><svg class="ic"><use href="#sunp"/></svg><svg class="ic"><use href="#bulbp"/></svg><svg class="ic"><use href="#thp"/></svg></div>
        <div class="grp"><svg class="ic"><use href="#wash"/></svg><svg class="ic"><use href="#wair"/></svg><svg class="ic"><use href="#bulb"/></svg><svg class="ic"><use href="#pred"/></svg><svg class="ic"><use href="#gear"/></svg><svg class="ic"><use href="#fauc"/></svg><svg class="ic"><use href="#tharr"/></svg><svg class="ic"><use href="#vent"/></svg></div>
      </div>
      <div class="pfoot">3 :: Loads</div>
    </div>
    <div class="panel p4">
      <div class="pbody">
        <div class="grp"><svg class="ic"><use href="#cyc"/></svg><svg class="ic"><use href="#th2"/></svg></div>
        <div class="grp"><svg class="ic"><use href="#l1"/></svg><svg class="ic"><use href="#AIR"/></svg></div>
        <div class="grp"><svg class="ic"><use href="#l2"/></svg><svg class="ic"><use href="#DOAS"/></svg></div>
        <div class="grp"><svg class="ic"><use href="#l3"/></svg><svg class="ic"><use href="#HC"/></svg></div>
        <div class="grp"><svg class="ic"><use href="#cyl"/></svg><svg class="ic"><use href="#SHW"/></svg></div>
        <div class="grp"><svg class="ic"><use href="#inv"/></svg><svg class="ic"><use href="#pv"/></svg></div>
      </div>
      <div class="pfoot">4 :: HVAC</div>
    </div>
    <div class="panel p5">
      <div class="pbody">
        <div class="grp"><svg class="ic"><use href="#os"/></svg><span class="ic"></span></div>
        <div class="grp"><svg class="ic"><use href="#ep"/></svg><svg class="ic"><use href="#eb"/></svg><svg class="ic"><use href="#awn"/></svg><svg class="ic"><use href="#ep2"/></svg></div>
        <div class="grp"><svg class="ic"><use href="#pl"/></svg><svg class="ic"><use href="#stp"/></svg><svg class="ic"><use href="#pin"/></svg><svg class="ic"><use href="#clp"/></svg><svg class="ic"><use href="#cl"/></svg><svg class="ic"><use href="#htp"/></svg></div>
      </div>
      <div class="pfoot">5 :: Simulate</div>
    </div>
    <div class="panel p6">
      <div class="pbody">
        <div class="grp"><svg class="ic"><use href="#rE"/></svg><svg class="ic"><use href="#r1"/></svg><svg class="ic"><use href="#rC"/></svg><svg class="ic"><use href="#rW"/></svg><svg class="ic"><use href="#rP"/></svg><svg class="ic"><use href="#rB"/></svg></div>
        <div class="grp"><svg class="ic"><use href="#cube1"/></svg><svg class="ic"><use href="#cube2"/></svg></div>
        <div class="grp"><svg class="ic"><use href="#tab"/></svg><svg class="ic"><use href="#bar"/></svg></div>
      </div>
      <div class="pfoot">6 :: Result</div>
    </div>
    <div class="panel p7">
      <div class="pbody">
        <div class="grp"><svg class="ic"><use href="#tAD"/></svg><svg class="ic"><use href="#tPM"/></svg><svg class="ic"><use href="#tUT"/></svg><span class="ic"></span></div>
        <div class="grp"><svg class="ic"><use href="#mtx"/></svg><svg class="ic"><use href="#tcube"/></svg></div>
      </div>
      <div class="pfoot">7 :: Thermal Map</div>
    </div>
  </section>
  <section class="toolbar">
    <svg class="tb" viewBox="0 0 30 34"><path d="M10 3q6-3 11 1l2 6-4 10H11L7 10z" fill="#eee" stroke="#777"/><path d="M5 21q10-8 20 0-10 12-20 0z" fill="#2a2a2a" stroke="#999"/></svg>
    <svg class="tb" viewBox="0 0 30 34"><path d="M19 3q5 0 8 5t-1 8L13 30q-5 2-9-3t-1-9z" fill="#fafafa" stroke="#777" stroke-width="1.6"/><ellipse cx="21" cy="10" rx="4.500" ry="5.500" fill="#fff" stroke="#777"/><ellipse cx="9" cy="24" rx="4" ry="5" fill="none" stroke="#bbb"/></svg>
    <span class="tb-on"><svg class="tb" viewBox="0 0 30 34"><path d="M19 3q5 0 8 5t-1 8L13 30q-5 2-9-3t-1-9z" fill="url(#gRed)" stroke="#300"/><ellipse cx="21" cy="10" rx="4.500" ry="5.500" fill="#7a0c0a"/></svg></span>
    <i class="tb-sep"></i>
    <svg class="tb" viewBox="0 0 30 34"><path d="M3 5q4-3 10-2 4 1 6 7t7 10q2 3 0 6-5 6-11 5-5-1-5-8T5 14 3 5z" fill="url(#gTeal)" stroke="#111"/></svg>
    <svg class="tb" viewBox="0 0 30 34"><circle cx="15" cy="17" r="12" fill="url(#gWhite)" stroke="#333"/><path d="M9 9l9-6q6 0 9 7l-1 9-5 4z" fill="url(#gGreen)" stroke="#111"/><ellipse cx="19" cy="12" rx="4" ry="3" fill="#0a4a0a"/></svg>
    <svg class="tb" viewBox="0 0 30 34"><circle cx="15" cy="17" r="13" fill="url(#gWhite)" stroke="#333"/><path d="M15 4a13 13 0 000 26z" fill="url(#gOrange)"/></svg>
    <i class="tb-sep tight"></i>
    <svg class="tb" viewBox="0 0 30 34"><path d="M15 4l9 3 4 10-4 9-9 4-9-4-4-9 4-10z" fill="url(#gBlue)" stroke="#123"/></svg>
    <span class="caret"></span>
  </section>
  <main class="canvas">
    <h1 class="headline">FERRAMENTAS DE VISUALIZAÇÃO<br>DE GEOMETRIAS E INFORMAÇÕES</h1>

    <div class="vlist v1">
      <em class="ctitle">HB Room Energy Attributes</em>
      <span class="vname">HB Room Energy Attributes</span><span class="vval">Construction Set</span><i class="vtri"></i><i class="vport"></i>
    </div>
    <div class="vlist v2">
      <em class="ctitle">HB Room Attributes</em>
      <span class="vname">HB Room Attributes</span><span class="vval">Display Name</span><i class="vtri"></i><i class="vport"></i>
    </div>

    <div class="node n1">
      <em class="ctitle dark">LabelRooms</em>
      <svg class="bal" viewBox="0 0 18 17"><path d="M3 1h12q2 0 2 2v8q0 2-2 2h-3l-3 3-3-3H3q-2 0-2-2V3q0-2 2-2z" fill="#f8bc28" stroke="#c88a10"/></svg>
      <div class="ins">
        <div class="pin in">_rooms_model</div><div class="pin in">_attribute_</div><div class="pin in">_txt_height_</div><div class="pin in">_font_</div>
      </div>
      <svg class="nic" viewBox="0 0 28 28"><path d="M14 1l11 6v14l-11 6-11-6V7z" fill="none" stroke="#8a5a20" stroke-dasharray="2 1"/><text class="tm" x="14" y="18" font-size="10">A</text></svg>
      <div class="outs">
        <div class="pin out">label_text</div><div class="pin out">base_pts</div><div class="pin out">labels</div><div class="pin out">wire_frame</div>
      </div>
      <span class="flat"><svg viewBox="0 0 14 14"><path d="M5 2h4v5h3l-5 6-5-6h3z" fill="#bbb" stroke="#333"/></svg></span>
      <div class="nfoot">1.8.1</div>
    </div>

    <div class="node n2">
      <em class="ctitle dark">VizByType</em>
      <svg class="bal" viewBox="0 0 18 17"><path d="M3 1h12q2 0 2 2v8q0 2-2 2h-3l-3 3-3-3H3q-2 0-2-2V3q0-2 2-2z" fill="#f8bc28" stroke="#c88a10"/></svg>
      <div class="ins mid"><div class="pin in">_hb_objs</div></div>
      <svg class="nic sq" viewBox="0 0 22 22"><rect x="1" y="1" width="20" height="20" fill="#6a5a4a"/><rect x="2" y="2" width="8.500" height="8.500" fill="#f0b050"/><rect x="11.500" y="2" width="8.500" height="8.500" fill="#8a1c1c"/><rect x="2" y="11.500" width="8.500" height="8.500" fill="#7a8a98"/><rect x="11.500" y="11.500" width="8.500" height="8.500" fill="#7a4ab0"/></svg>
      <div class="outs">
        <div class="pin out">walls</div><div class="pin out">interior_walls</div><div class="pin out">roofs</div><div class="pin out">ceilings</div><div class="pin out">exterior_floors</div><div class="pin out">interior_floors</div><div class="pin out">air_walls</div><div class="pin out">apertures</div><div class="pin out">interior_apertures</div><div class="pin out">doors</div><div class="pin out">interior_doors</div><div class="pin out">outdoor_shades</div><div class="pin out">indoor_shades</div><div class="pin out">wire_frame</div>
      </div>
      <div class="nfoot">1.8.0</div>
    </div>

    <svg class="dial" viewBox="0 0 66 60">
      <path d="M2 19l8-5 6 6-7 5z" fill="#111"/>
      <path d="M13 36a28 28 0 0050 4M18 16q4-9 13-12" fill="none" stroke="#111" stroke-width="6"/>
      <defs><radialGradient id="dg"><stop offset="0" stop-color="#eee"/><stop offset="1" stop-color="#b4b4b4"/></radialGradient></defs>
      <circle cx="39" cy="28" r="24" fill="url(#dg)" stroke="#fff" stroke-width="2"/>
      <circle cx="39" cy="28" r="25.500" fill="none" stroke="#111" stroke-width="1"/>
      <path d="M39 4l-5 7h7zM63 28l-8-4v7zM39 52l-5-7h7zM15 28l8-3v7z" fill="#fff"/>
    </svg>

    <div class="dock">
      <span class="dbtn on"><svg viewBox="0 0 22 22"><path d="M3 15l3-3 1 3 3-5 1 4 3-6 1 5 3-7" fill="none" stroke="#9a5a10" stroke-width="2"/></svg></span>
      <span class="dbtn"><svg viewBox="0 0 22 22"><path d="M2 4h18v14H2z" fill="#ddd" stroke="#333" stroke-width="2"/><path d="M2 9h18M2 14h18" stroke="#333" stroke-width="2"/></svg></span>
    </div>
  </main>
  <footer class="status">
    <span class="info">!</span>
    <span class="autosave">Autosave complete (70 seconds ago)</span>
    <span class="ver">1.0.0008</span>
  </footer>

  <div class="dropdown">
    <div class="ddhead"><span>0 :: Basic Properties</span></div>
    <div class="ddbody">
      <div class="ddgrp">
        <div class="mi"><svg><use href="#vint"/></svg>HB Building Vintages</div><div class="mi"><svg><use href="#zones"/></svg>HB Climate Zones</div>
        <div class="mi"><svg><use href="#afc"/></svg>HB Face Energy Attributes</div><div class="mi"><svg><use href="#arm"/></svg>HB Room Energy Attributes</div>
      </div>
      <div class="ddgrp">
        <div class="mi"><svg><use href="#blend"/></svg>HB Blend ProgramTypes</div><div class="mi"><svg><use href="#prog"/></svg>HB Building Programs</div>
        <div class="mi"><svg><use href="#house"/></svg>HB ProgramType</div><div class="mi"><svg><use href="#sprog"/></svg>HB Search Programs</div>
      </div>
      <div class="ddgrp">
        <div class="mi"><svg><use href="#clim"/></svg>HB Construction Set by Climate</div><div class="mi"><svg><use href="#types"/></svg>HB Construction Types</div>
        <div class="mi"><svg><use href="#cset"/></svg>HB ConstructionSet</div><div class="mi"><svg><use href="#scon"/></svg>HB Search Construction Sets</div>
      </div>
      <div class="ddgrp">
        <div class="mi"><svg><use href="#brick"/></svg>HB Exterior Construction Subset</div><div class="mi"><svg><use href="#grnd"/></svg>HB Ground Construction Subset</div>
        <div class="mi"><svg><use href="#inter"/></svg>HB Interior Construction Subset</div><div class="mi"><svg><use href="#subf"/></svg>HB Subface Subset</div>
      </div>
      <div class="ddgrp">
        <div class="mi"><svg><use href="#hexa"/></svg>HB Adiabatic by Type</div><div class="mi"><svg><use href="#plen"/></svg>HB Plenum</div>
      </div>
      <div class="ddgrp">
        <div class="mi"><svg><use href="#gbar"/></svg>HB Ground</div><div class="mi"><svg><use href="#mass"/></svg>HB Internal Mass</div>
        <div class="mi"><svg><use href="#osid"/></svg>HB Other Side Temperature</div><div class="mi"><svg><use href="#patch"/></svg>HB Patch Missing Adjacency</div>
      </div>
    </div>
  </div>

  <svg class="marks" viewBox="0 0 1920 1021">
    <g class="blue">
      <path d="M650 21Q672 12 690 15T692 28Q680 42 650 55Q680 58 709 57"/>
      <path d="M1077 33Q1092 25 1101 10V58M1077 62H1128"/>
      <path d="M926 55Q922 70 924 100Q970 102 1017 101Q1020 80 1022 62Q980 59 934 61"/>
      <path d="M633 40Q600 41 580 42Q555 46 531 52Q480 66 439 80Q405 94 375 110Q335 135 298 160Q306 170 304 173Q303 185 298 190Q280 193 266 191Q262 178 264 165M241 157Q248 152 255 153Q270 152 282 153Q292 156 298 162"/>
    </g>
    <g class="magenta">
      <path d="M283 231Q350 230 421 231Q450 233 478 233L530 233Q538 233 539 240L538 272Q538 278 530 278L287 278Q285 260 285 240Q284 234 288 231"/>
      <path d="M540 258Q546 257 551 258Q562 268 570 290Q585 330 600 363Q622 425 649 468Q670 490 698 494Q770 505 857 503L992 504"/>
      <path d="M955 484Q975 497 994 504Q975 518 955 532"/>
    </g>
  </svg>
</div>
</body>
</html>
```
FILE: styles.css
```css
* { box-sizing: border-box; }
html, body { margin: 0; padding: 0; }
body { font-family: "Noto Sans", "Open Sans", sans-serif; font-size: 14px; color: #222; background: #f0f0f0; overflow: hidden; }
.defs { position: absolute; width: 0; height: 0; }
.tm { font-family: "DejaVu Sans Mono", monospace; font-weight: 700; text-anchor: middle; fill: #222; }
.tl { font-family: "Liberation Sans", sans-serif; font-weight: 700; text-anchor: middle; fill: #e01c24; }
.tl.wh { fill: #cfe4fa; }
.tp { font-family: "Liberation Serif", serif; font-weight: 700; font-size: 19px; text-anchor: middle; fill: #fff; stroke: #222; stroke-width: .8; }
.te { font-family: "Liberation Sans", sans-serif; font-weight: 700; text-anchor: middle; }

.page { position: relative; width: 1920px; height: 1021px; display: flex; flex-direction: column; }

.titlebar { height: 28px; flex: none; display: flex; align-items: center; justify-content: space-between; padding-left: 3px; padding-bottom: 2px; background: #f2f2f2; }
.wintitle { color: #8a8a8a; font-size: 14.2px; }
.winctl { display: flex; gap: 46px; padding-right: 25px; }
.winctl svg { width: 14px; height: 14px; }

.menubar { height: 37px; flex: none; display: flex; align-items: center; background: #fafafa; padding: 2px 0 0 16px; gap: 23.5px; font-size: 14.25px; color: #1a1a1a; }
.docname { margin-left: auto; padding-right: 12px; font-weight: 400; }

.tabs { height: 28px; flex: none; display: flex; align-items: center; padding-left: 0; background: #f2f2f2; color: #6a6a6a; font-size: 14.25px; }
.tabs span { padding: 0 10.65px; height: 28px; line-height: 29px; }
.tabs .active { color: #111; height: 30px; margin-top: 2px; line-height: 24px; border: 1px solid #b4b4b4; border-bottom: 0; border-radius: 6px 6px 0 0; padding: 0 11px; background: linear-gradient(#fafafa 60%, #e4e4e4); }

.ribbon { height: 111px; flex: none; display: flex; gap: 5px; padding: 3px 0 0 4px; background: #f0f0f0; border-bottom: 1px solid #8a8a8a; border-top: 1px solid #bcbcbc; }
.panel { height: 90px; display: flex; flex-direction: column; border: 1px solid #aaa; border-radius: 6px; overflow: hidden; background: linear-gradient(#dedede, #ebebeb); }
.p0 { width: 285px; } .p1 { width: 251px; } .p2 { width: 214px; } .p3 { width: 273px; }
.p4 { width: 275px; } .p5 { width: 237px; } .p6 { width: 203px; } .p7 { width: 122px; }
.pbody { height: 71px; flex: none; display: flex; }
.grp { flex: 1 1 auto; display: grid; grid-template-rows: 34.5px 34.5px; grid-auto-flow: column; grid-auto-columns: 35px; justify-content: center; padding-top: 2px; border-left: 1px solid #cfcfcf; }
.grp:first-child { border-left: 0; }
.ic { width: 31px; height: 31px; margin: auto; display: block; }
.pfoot { height: 17px; flex: none; position: relative; background: linear-gradient(#141414, #303030); color: #f4f4f4; font-size: 11.4px; line-height: 13px; text-align: center; }
.pfoot::after { content: ""; position: absolute; right: 4px; top: 3px; width: 10px; height: 10px; background: #8a8a8a; clip-path: polygon(35% 0, 65% 0, 65% 45%, 100% 45%, 50% 100%, 0 45%, 35% 45%); }

.toolbar { height: 38px; flex: none; display: flex; align-items: center; justify-content: flex-end; gap: 5px; padding-right: 6px; background: linear-gradient(#fff, #f6f6f6); }
.tb { width: 30px; height: 34px; display: block; }
.tb-on { width: 33px; height: 33px; border: 1px solid #1a78d8; display: flex; align-items: center; justify-content: center; }
.tb-sep { width: 1px; height: 26px; background: #bbb; margin: 0 3px; }
.tb-sep.tight { margin: 0 -2px 0 1px; }
.caret { width: 0; height: 0; border: 3px solid transparent; border-top: 4px solid #111; border-bottom: 0; margin-left: -3px; }

.canvas { flex: 1; position: relative; z-index: 0; overflow: hidden; background-color: #d4d0c9; border-left: 2px solid #8a8a8a;
  background-image:
    repeating-linear-gradient(90deg, transparent 0 158.7px, #bab6af 158.7px 159.7px),
    repeating-linear-gradient(180deg, transparent 0 52.3px, #bab6af 52.3px 53.3px);
  background-position: -110.7px 0, 0 -21.3px; }

.headline { position: absolute; left: 914.7px; top: 77px; margin: 0; font-family: "Liberation Sans", Arial, sans-serif; font-weight: 400; font-size: 56px; line-height: 61px; letter-spacing: .95px; -webkit-text-stroke: .6px #0a0a0a; color: #0a0a0a; white-space: nowrap; }

.ctitle { position: absolute; left: 0; right: 0; top: -21px; text-align: center; font-size: 14px; line-height: 18px; color: #5a5a5a; white-space: nowrap; }
.ctitle.dark { color: #4a1414; }

.vlist { position: absolute; height: 24px; display: flex; align-items: center; border: 1px solid #555; border-bottom-width: 2px; border-radius: 3px; background: linear-gradient(#fafafa, #d0d0d0); font-size: 11px; color: #1a1a1a; }
.v1 { left: 1002px; top: 255px; width: 481px; }
.v2 { left: 1053px; top: 357px; width: 365px; }
.vname { text-align: center; border-right: 1px solid #b4b4b4; height: 100%; line-height: 21px; }
.v1 .vname { width: 191px; } .v2 .vname { width: 143px; }
.vval { flex: 1; text-align: center; padding-right: 24px; }
.vtri { position: absolute; right: 4px; top: 5px; width: 14px; height: 14px; background: #333; clip-path: polygon(0 0, 100% 0, 50% 100%); }
.vport { position: absolute; right: -7px; top: 6px; width: 8px; height: 11px; border: 2.5px solid #111; border-left: 0; border-radius: 0 6px 6px 0; background: #fff; }

.node { position: absolute; display: flex; border: 1px solid #5a2a1a; border-radius: 4px; background: linear-gradient(#ffad30, #ff8a10); font-size: 11.5px; color: #1a1a1a; box-shadow: inset 0 6px 0 -1px rgba(255,255,255,.45); }
.n1 { left: 1534px; top: 255px; width: 204px; height: 89px; padding: 1px 0; }
.n2 { left: 1545px; top: 387px; width: 189px; height: 302px; padding-top: 2px; font-size: 11px; }
.ins { position: relative; width: 100px; text-align: right; }
.ins.mid { width: 50px; align-self: center; margin-bottom: 2px; }
.nic { width: 26px; height: 26px; flex: none; margin: auto 3px auto 4px; }
.nic.sq { width: 22px; height: 22px; margin: auto 6px auto 7px; }
.pin { position: relative; height: 21.2px; line-height: 20px; white-space: nowrap; }
.n2 .pin.out { height: 21.24px; line-height: 18.5px; }
.outs { flex: 1; padding-left: 2px; }
.n2 .outs { padding-left: 1px; }
.pin::after { content: ""; position: absolute; top: 5px; width: 10px; height: 11px; border: 2.5px solid #111; border-radius: 50%; background: #fff; z-index: -1; }
.n1 .in::after { right: 95px; }
.n2 .in::after { right: 45px; }
.out::after { right: -6px; }
.flat { position: absolute; left: 4px; top: 4px; width: 15px; height: 15px; border: 1px solid #777; border-radius: 3px; background: #ddd; }
.flat svg { width: 13px; height: 13px; display: block; }
.nfoot { position: absolute; left: 6px; right: 6px; bottom: -17px; height: 16px; background: #4d0a00; border-radius: 0 0 3px 3px; color: #e8dcd8; font-size: 11.5px; line-height: 15px; text-align: center; }
.bal { position: absolute; right: 1px; top: -19px; width: 20px; height: 18px; }
.n2 .ctitle { left: -6px; }

.dial { position: absolute; right: 10px; bottom: 8px; width: 66px; height: 60px; }

.dock { position: absolute; left: 0; bottom: 0; width: 79px; height: 35px; display: flex; align-items: center; gap: 11px; padding-left: 6px; border: 1px solid #111; border-left: 0; background: linear-gradient(90deg, #dcdcdc 80%, #888 92%); }
.dbtn { width: 23px; height: 23px; border: 1px solid #666; border-radius: 3px; background: #ddd; }
.dbtn.on { background: #ffc828; }
.dbtn svg { width: 21px; height: 21px; display: block; }

.status { height: 30px; flex: none; position: relative; display: flex; align-items: center; padding-left: 5px; padding-top: 2px; background: #f0f0f0; border-top: 2px solid #fff; border-bottom: 1px solid #333; font-size: 14.3px; color: #222; }
.info { width: 20px; height: 20px; border-radius: 50%; background: #1f5fb8; color: #fff; text-align: center; line-height: 20px; font-weight: 700; font-size: 15px; margin-right: 4px; }
.ver { margin-left: auto; padding-right: 42px; color: #777; font-size: 13.5px; }

.dropdown { position: absolute; left: 4px; top: 188px; width: 572px; height: 431px; display: flex; flex-direction: column; }
.ddhead { height: 18px; flex: none; background: #1a1a1a; border-radius: 3px 3px 0 0; color: #666; font-size: 11.4px; line-height: 17px; }
.ddhead span { display: block; width: 284px; text-align: center; transform: scaleY(-1); }
.ddbody { flex: 1; background: #f0f0f0; border: 1px solid #666; border-top: 0; }
.ddgrp { display: grid; grid-template-columns: 284.5px 1fr; grid-auto-rows: 32px; padding: 6px 0; position: relative; }
.ddgrp:first-child { padding-top: 1px; }
.ddgrp:last-child { padding-bottom: 0; }
.ddgrp + .ddgrp::before { content: ""; position: absolute; left: 40px; right: 30px; top: 0; height: 1px; background: #d8d8d8; }
.mi { display: flex; align-items: center; padding-bottom: 2px; font-size: 14.25px; color: #222; white-space: nowrap; }
.mi svg { width: 24px; height: 24px; margin: 2px 13px 0 5px; flex: none; }

.marks { position: absolute; left: 0; top: 0; width: 1920px; height: 1021px; pointer-events: none; }
.marks path { fill: none; stroke-linecap: round; stroke-linejoin: round; }
.blue path { stroke: #0c50d4; stroke-width: 3.5; }
.magenta path { stroke: #b0166e; stroke-width: 3.5; }
```
